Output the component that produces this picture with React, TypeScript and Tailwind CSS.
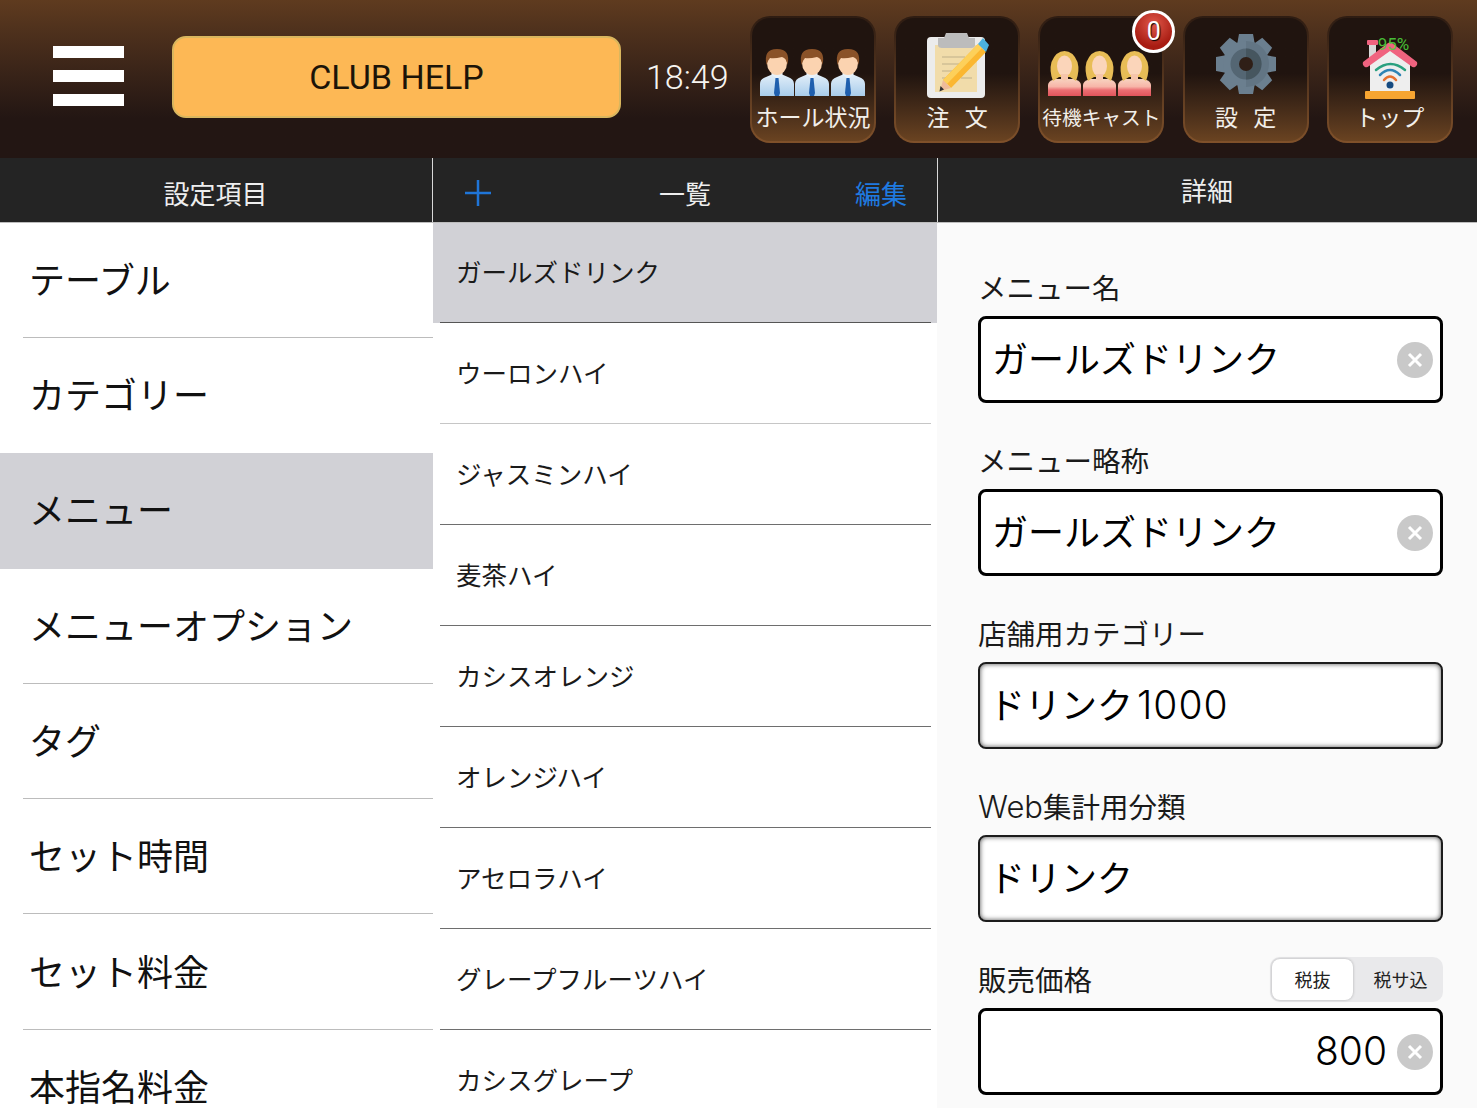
import React from "react";

const jp = "font-['Noto_Sans_CJK_JP','Noto_Sans',sans-serif]";
const latin = "font-['Inter',sans-serif] font-light";

const settings = ["テーブル", "カテゴリー", "メニュー", "メニューオプション", "タグ", "セット時間", "セット料金", "本指名料金"];
const drinks = ["ガールズドリンク", "ウーロンハイ", "ジャスミンハイ", "麦茶ハイ", "カシスオレンジ", "オレンジハイ", "アセロラハイ", "グレープフルーツハイ", "カシスグレープ"];

// three little men in shirts
const Man = ({ x }: { x: number }) => (
  <g transform={`translate(${x} 0)`}>
    <path d="M0 47 V35 Q0 30 6 28 L13 25 H21 L28 28 Q34 30 34 35 V47 Z" fill="url(#shirt)" />
    <path d="M11 25 L17 30 L23 25 L21 23 H13 Z" fill="#e9f2fa" />
    <path d="M15.5 29 H18.5 L20 44 L19 47 H15 L14 44 Z" fill="#1f5fae" />
    <ellipse cx="17" cy="14" rx="10" ry="12" fill="#fbd3b0" />
    <path d="M6.5 16 Q3 0 17 0 Q31 0 27.5 16 Q26.5 9 22 8 Q14 10 10 9 Q8 11 6.5 16 Z" fill="#8a5228" />
  </g>
);

const Woman = ({ x }: { x: number }) => (
  <g transform={`translate(${x} 0)`}>
    <path d="M0 45 V34 Q0 30 7 28 H26 Q33 30 33 34 V45 Z" fill="url(#dress)" />
    <path d="M5 30 Q1 20 3.5 11 Q8 0 16.5 0 Q25 0 29.5 11 Q32 20 28 30 L22 26 H11 Z" fill="#e8bd56" />
    <ellipse cx="16.5" cy="15" rx="7.5" ry="10.5" fill="#fbd5ba" />
    <path d="M13 23 H20 V28 Q16.5 31 13 28 Z" fill="#f6c5ac" />
  </g>
);

const MenIcon = () => (
  <svg width="106" height="47" viewBox="0 0 106 47">
    <defs>
      <linearGradient id="shirt" x1="0" y1="0" x2="0" y2="1">
        <stop offset="0" stopColor="#e3eff9" />
        <stop offset="1" stopColor="#a9cdeb" />
      </linearGradient>
    </defs>
    <Man x={0} /><Man x={35} /><Man x={71} />
  </svg>
);

const WomenIcon = () => (
  <svg width="106" height="45" viewBox="0 0 106 45">
    <defs>
      <linearGradient id="dress" x1="0" y1="0" x2="0" y2="1">
        <stop offset="0" stopColor="#f8d3c0" />
        <stop offset="0.45" stopColor="#f7b5a8" />
        <stop offset="0.65" stopColor="#ec6f73" />
        <stop offset="1" stopColor="#e2545b" />
      </linearGradient>
    </defs>
    <Woman x={0} /><Woman x={35} /><Woman x={70} />
  </svg>
);

const OrderIcon = () => (
  <svg width="64" height="65" viewBox="0 0 64 65" className="overflow-visible">
    <rect x="2" y="4" width="58" height="61" rx="4" fill="#ececec" />
    <rect x="10" y="12" width="42" height="47" fill="#f1dcaa" />
    <path d="M21 0 H42 L44 5 H50 V12 Q50 15 46 15 H17 Q13 15 13 12 V5 H19 Z" fill="#bcbcbc" />
    <g stroke="#cfbf94" strokeWidth="1.5">
      <line x1="17" y1="24" x2="40" y2="24" /><line x1="17" y1="31" x2="36" y2="31" /><line x1="17" y1="38" x2="30" y2="38" /><line x1="17" y1="45" x2="24" y2="45" />
      <line x1="36" y1="45" x2="47" y2="45" />
    </g>
    <path d="M18 47 L53 11 L61 19 L26 55 Z" fill="#fbb731" />
    <path d="M18 47 L53 11 L57 15 L22 51 Z" fill="#fdd05a" />
    <path d="M53 11 L58 5 L64 12 L61 19 Z" fill="#4bb2dd" />
    <path d="M18 47 L26 55 L15 58 Z" fill="#eebb99" />
    <path d="M15.5 53 L19 56.5 L14.5 58.5 Z" fill="#333" />
  </svg>
);

const GearIcon = () => {
  const teeth = [0, 45, 90, 135, 180, 225, 270, 315];
  return (
    <svg width="62" height="62" viewBox="0 0 62 62">
      {teeth.map((deg) => (
        <path key={deg} d="M24 1 H38 L40 12 H22 Z" fill="#6b7f8f" transform={`rotate(${deg} 31 31)`} />
      ))}
      <circle cx="31" cy="31" r="23" fill="#6b7f8f" />
      <path d="M31 8 A23 23 0 0 1 31 54 Z" fill="#627584" />
      <circle cx="31" cy="31" r="15.5" fill="#546673" />
      <path d="M31 15.5 A15.5 15.5 0 0 1 31 46.5 Z" fill="#46565f" />
      <circle cx="31" cy="31" r="7" fill="#2f1f17" />
    </svg>
  );
};

const HouseIcon = () => (
  <svg width="56" height="61" viewBox="0 0 56 61">
    <rect x="7" y="7" width="7" height="14" fill="#d9d9d9" />
    <rect x="5" y="2" width="11" height="5" rx="1" fill="#f0637f" />
    <path d="M8 53 V24 L28 8 L48 24 V53 Z" fill="#eeeeee" />
    <path d="M1 24 L26 5 Q28 4 30 5 L55 24 Q56 27 53 29 Q51 30 49 28 L28 13 L7 28 Q5 30 3 29 Q0 27 1 24 Z" fill="#f0637f" />
    <rect x="3" y="53" width="50" height="8" rx="1" fill="#f7a531" />
    <path d="M14 32 Q28.5 20 43 32" stroke="#2aa07f" strokeWidth="2.5" fill="none" strokeLinecap="round" />
    <path d="M18 37 Q28 27 38 37" stroke="#2d84b5" strokeWidth="2.5" fill="none" strokeLinecap="round" />
    <path d="M22 42 Q28 35 34 42" stroke="#e5702f" strokeWidth="2.5" fill="none" strokeLinecap="round" />
    <circle cx="28" cy="47" r="3.5" fill="#164a80" />
  </svg>
);

const PlusIcon = () => (
  <svg width="26" height="26" viewBox="0 0 26 26">
    <path d="M13 0 V26 M0 13 H26" stroke="#1f75d8" strokeWidth="2.5" />
  </svg>
);

const Tile = ({ label, icon, pad, small, spaced, children }: { label: string; icon: React.ReactNode; pad: string; small?: boolean; spaced?: boolean; children?: React.ReactNode }) => (
  <div className="relative h-[127px] w-[126px] rounded-[20px] bg-gradient-to-b from-[#2e1c12] to-[#80512a] p-[2px]">
    <div className="flex h-full w-full flex-col items-center rounded-[18px] bg-gradient-to-b from-[#20140f] from-45% to-[#6a4321]">
      <div className={`flex h-[87px] w-full shrink-0 items-end justify-center ${pad}`}>{icon}</div>
      <div className={`${jp} whitespace-pre leading-none text-[#f2efea] ${small ? "mt-[2px] text-[19.7px]" : "text-[23px]"} ${spaced ? "[word-spacing:10px]" : ""}`}>{label}</div>
    </div>
    {children}
  </div>
);

const ClearButton = () => (
  <span className="flex h-9 w-9 shrink-0 items-center justify-center rounded-full bg-[#c9c9c9]">
    <svg width="16" height="16" viewBox="0 0 16 16">
      <path d="M2 2 L14 14 M14 2 L2 14" stroke="#fff" strokeWidth="3" />
    </svg>
  </span>
);

const Field = ({ label, value, clear, extra, children }: { label: React.ReactNode; value?: string; clear?: boolean; extra?: React.ReactNode; children?: React.ReactNode }) => (
  <div className="mb-[37px]">
    <div className="mb-[9px] flex h-10 items-center justify-between">
      <span className={`${jp} text-[28.5px] leading-none text-[#1a1a1a]`}>{label}</span>
      {extra}
    </div>
    <div className={`flex h-[87px] items-center rounded-lg bg-white pr-[7px] ${clear ? "border-[3px] border-black pl-[11px]" : "border-2 border-[#1c1c1c] pl-[9px] shadow-[inset_0_0_5px_rgba(0,0,0,0.7)]"}`}>
      <span className={`${jp} flex-1 text-[36px] leading-none text-black ${children ? "pb-[2px]" : "pb-[6px]"}`}>{children ?? value}</span>
      {clear && <ClearButton />}
    </div>
  </div>
);

export default function App() {
  return (
    <div className="flex h-[1108px] w-[1477px] flex-col overflow-hidden bg-white">
      {/* top bar */}
      <header className="flex h-[158px] shrink-0 items-start bg-gradient-to-b from-[#5f3b1f] to-[#231613] to-75% pt-4 font-['Roboto',sans-serif]">
        <div className="ml-[53px] mt-[30px] flex w-[71px] flex-col gap-3">
          <div className="h-3 bg-white" />
          <div className="h-3 bg-white" />
          <div className="h-3 bg-white" />
        </div>
        <div className="ml-12 mt-5 flex h-[82px] w-[449px] items-center justify-center rounded-[14px] border-2 border-[#d9b65e] bg-[#fdb855] text-[34px] text-[#1c1408]">
          CLUB HELP
        </div>
        <div className="ml-[25px] mt-[41px] w-[104px] text-[34px] font-light leading-10 text-[#f6f4f0]">18:49</div>
        <div className="flex gap-[18.2px]">
          <Tile label="ホール状況" pad="pb-[9px]" icon={<MenIcon />} />
          <Tile label="注 文" pad="pb-[7px]" spaced icon={<OrderIcon />} />
          <Tile label="待機キャスト" pad="pb-[9px]" small icon={<WomenIcon />}>
            <div className="absolute right-[-11px] top-[-6px] flex h-[43px] w-[43px] items-center justify-center rounded-full border-[3px] border-white bg-[radial-gradient(circle_at_50%_30%,#e0584a,#a81c12_70%)] text-[25px] text-white [text-shadow:1px_1px_1px_#000]">
              0
            </div>
          </Tile>
          <Tile label="設 定" pad="pb-[10px]" spaced icon={<GearIcon />} />
          <Tile
            label="トップ"
            pad="pb-[6px]"
            icon={
              <div className="relative">
                <HouseIcon />
                <span className="absolute left-[16px] top-[-2px] text-[17px] leading-none text-[#4ccf3c] opacity-90">95%</span>
              </div>
            }
          />
        </div>
      </header>

      {/* column titles */}
      <div className={`${jp} relative z-10 flex h-[65px] shrink-0 border-b border-[#bdbdbd] bg-[#242424] text-[26px] leading-none text-[#eeeeee]`}>
        <div className="flex w-[433px] items-center justify-center border-r border-[#d9d9d9] pr-[1px] pt-[6px]">設定項目</div>
        <div className="flex w-[505px] items-center justify-between border-r border-[#d9d9d9] pl-[32px] pr-[30px] pt-[6px]">
          <PlusIcon />
          <span className="pl-[24px]">一覧</span>
          <span className="text-[#1f7ae0]">編集</span>
        </div>
        <div className="flex flex-1 items-center justify-center pr-[1px]">詳細</div>
      </div>

      <div className="flex min-h-0 flex-1">
        {/* settings list */}
        <div className="-mt-[0.4px] w-[433px] shrink-0">
          {settings.map((name) => (
            <div key={name} className={`flex h-[115.3px] flex-col ${name === "メニュー" ? "bg-[#d1d1d6]" : ""}`}>
              <div className={`${jp} flex flex-1 items-center pb-[4px] pl-[29px] text-[36px] leading-none text-[#111111]`}>{name}</div>
              <div className={`ml-[23px] h-px ${name === "メニュー" || name === "カテゴリー" ? "bg-transparent" : "bg-[#bcbcbc]"}`} />
            </div>
          ))}
        </div>

        {/* menu list */}
        <div className="-mt-px w-[504px] shrink-0">
          {drinks.map((name, i) => (
            <div key={name} className={`h-[101px] ${i === 0 ? "bg-[#d1d1d6]" : ""}`}>
              <div className={`${jp} flex h-[100px] items-center pb-[2px] pl-[23px] text-[25.5px] leading-none text-[#1a1a1a]`}>{name}</div>
              <div className={`ml-[7px] mr-[6px] h-px ${i === 0 ? "bg-[#555555]" : i === 1 ? "bg-[#c6c6c6]" : "bg-[#6e6e6e]"}`} />
            </div>
          ))}
        </div>

        {/* detail form */}
        <div className="min-w-0 flex-1 bg-[#fafafa] pl-[41px] pr-[34px] pt-[44px]">
          <Field label="メニュー名" value="ガールズドリンク" clear />
          <Field label="メニュー略称" value="ガールズドリンク" clear />
          <Field label="店舗用カテゴリー">
            ドリンク<span className={`${latin} ml-[4px] text-[39px] tracking-[1px]`}>1000</span>
          </Field>
          <Field label={<><span className={`${latin} text-[31px]`}>Web</span>集計用分類</>} value="ドリンク" />
          <Field
            label="販売価格"
            clear
            extra={
              <div className={`${jp} flex h-[45px] w-[173px] items-center rounded-[10px] bg-[#e9e9eb] p-[2px] text-[18px] text-[#222222]`}>
                <span className="flex h-full w-[81px] items-center justify-center rounded-[8px] bg-white shadow-[0_0_3px_rgba(0,0,0,0.25)]">税抜</span>
                <span className="flex-1 pl-[7px] text-center">税サ込</span>
              </div>
            }
          >
            <span className={`${latin} block pr-[10px] text-right text-[39px]`}>800</span>
          </Field>
        </div>
      </div>
    </div>
  );
}
